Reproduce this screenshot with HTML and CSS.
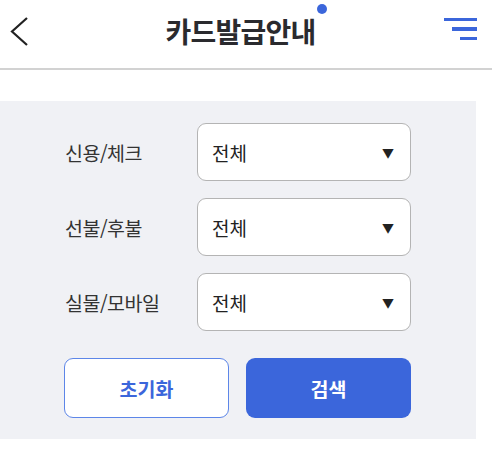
FILE: index.html
```html
<!DOCTYPE html>
<html lang="ko">
<head>
    <meta charset="UTF-8">
    <meta name="viewport" content="width=device-width, initial-scale=1.0">
    <title>카드발급안내</title>
    <link rel="stylesheet" href="styles.css">
</head>
<body>

    <!-- Header -->
    <header class="header">
        <button class="back-btn" aria-label="뒤로">
            <svg width="20" height="32" viewBox="0 0 20 32">
                <path d="M18 2 L3 15.5 L18 29" fill="none" stroke="#222" stroke-width="2.2"/>
            </svg>
        </button>
        <h1 class="title">카드발급안내<span class="dot"></span></h1>
        <button class="menu-btn" aria-label="메뉴">
            <span class="line l1"></span>
            <span class="line l2"></span>
            <span class="line l3"></span>
        </button>
    </header>

    <!-- Search Panel -->
    <section class="panel">
        <div class="row">
            <label class="label">신용/체크</label>
            <div class="select">
                <span>전체</span>
                <span class="arrow">▼</span>
            </div>
        </div>
        <div class="row">
            <label class="label">선불/후불</label>
            <div class="select">
                <span>전체</span>
                <span class="arrow">▼</span>
            </div>
        </div>
        <div class="row">
            <label class="label">실물/모바일</label>
            <div class="select">
                <span>전체</span>
                <span class="arrow">▼</span>
            </div>
        </div>

        <div class="buttons">
            <button class="btn btn-reset">초기화</button>
            <button class="btn btn-search">검색</button>
        </div>
    </section>

</body>
</html>
```

FILE: styles.css
```css
body {
    margin: 0;
    background-color: #fff;
    color: #222;
    font-family: "Noto Sans CJK KR", "Noto Sans", sans-serif;
}

button {
    font-family: inherit;
    cursor: pointer;
}

/* Header */
.header {
    height: 68px;
    border-bottom: 2px solid #d2d2d2;
    display: flex;
    align-items: center;
    justify-content: space-between;
    padding: 0 15px 0 9px;
}

.back-btn {
    border: none;
    background: none;
    padding: 0;
    width: 20px;
    height: 32px;
    margin-top: -4px;
}

.title {
    margin: 0 0 6px 8px;
    font-size: 28px;
    font-weight: 700;
    color: #2a2a2e;
    letter-spacing: -0.8px;
    position: relative;
}

.dot {
    position: absolute;
    top: -7px;
    right: -12px;
    width: 10px;
    height: 10px;
    border-radius: 50%;
    background-color: #3b66db;
}

.menu-btn {
    border: none;
    background: none;
    padding: 0;
    width: 33px;
    display: flex;
    flex-direction: column;
    align-items: flex-end;
    gap: 6px;
    margin-bottom: 10px;
}

.line {
    height: 3.5px;
    background-color: #3b66db;
}

.l1 { width: 33px; }
.l2 { width: 25px; }
.l3 { width: 17px; }

/* Panel */
.panel {
    width: 476px;
    margin-top: 31px;
    background-color: #f0f1f5;
    padding: 22px 0 21px 0;
    box-sizing: border-box;
}

.row {
    display: flex;
    align-items: center;
    margin-bottom: 17px;
    padding-left: 65px;
}

.label {
    width: 132px;
    font-size: 19.5px;
    color: #333;
    letter-spacing: -0.5px;
}

.select {
    width: 214px;
    height: 58px;
    box-sizing: border-box;
    background-color: #fff;
    border: 1.5px solid #b4b4b4;
    border-radius: 9px;
    display: flex;
    align-items: center;
    justify-content: space-between;
    padding: 0 16px 0 14px;
    font-size: 19px;
    color: #222;
}

.arrow {
    font-size: 12px;
    color: #222;
}

.buttons {
    display: flex;
    gap: 17px;
    padding-left: 64px;
    margin-top: 27px;
}

.btn {
    width: 165px;
    height: 60px;
    border-radius: 9px;
    font-size: 19.5px;
    font-weight: 700;
}

.btn-reset {
    background-color: #fff;
    border: 1.5px solid #5d86e8;
    color: #3b66db;
}

.btn-search {
    background-color: #3b66db;
    border: none;
    color: #fff;
}
```
